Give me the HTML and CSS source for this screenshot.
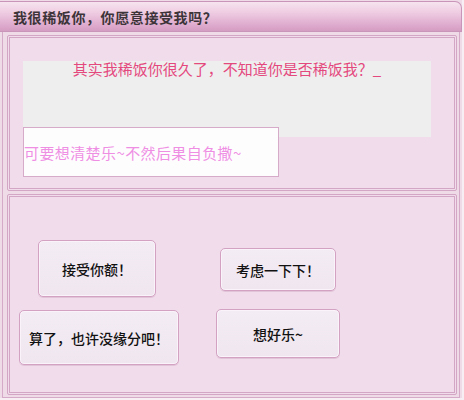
FILE: index.html
```html
<!DOCTYPE html>
<html lang="zh-CN">
<head>
<meta charset="utf-8">
<title>我很稀饭你</title>
<link rel="stylesheet" href="styles.css">
</head>
<body>
<div class="window">
  <div class="titlebar"><span class="title">我很稀饭你，你愿意接受我吗？</span></div>
  <div class="frame">
    <div class="panel panel-top">
      <div class="gray-field"><span class="love-text">其实我稀饭你很久了，不知道你是否稀饭我？_</span></div>
      <div class="white-field"><span class="warn-text">可要想清楚乐~不然后果自负撒~</span></div>
    </div>
    <div class="panel panel-bottom">
      <div class="row row-1">
        <button class="btn btn-accept">接受你额！</button>
        <button class="btn btn-think">考虑一下下！</button>
      </div>
      <div class="row row-2">
        <button class="btn btn-reject">算了，也许没缘分吧！</button>
        <button class="btn btn-ok">想好乐~</button>
      </div>
    </div>
  </div>
</div>
</body>
</html>
```
FILE: styles.css
```css
html, body {
  margin: 0;
  padding: 0;
  background: #f7eef4;
  font-family: "Noto Sans CJK SC", "Noto Sans", sans-serif;
}

.window {
  width: 462px;
  height: 398px;
  display: flex;
  flex-direction: column;
  background: #efdbe8;
}

.titlebar {
  box-sizing: border-box;
  height: 31px;
  margin-top: 1px;
  border: 1px solid #c996b9;
  border-left: none;
  border-radius: 0 7px 0 0;
  background: linear-gradient(to bottom, #f6e4ef 0%, #efcde2 35%, #e0aed0 75%, #d49cc2 100%);
  display: flex;
  align-items: center;
  padding-left: 13px;
}

.title {
  font-size: 14px;
  font-weight: bold;
  letter-spacing: 0.6px;
  color: #3c3439;
  line-height: 16px;
  margin-top: 1px;
}

.frame {
  flex: 1;
  display: flex;
  flex-direction: column;
  gap: 3px;
  padding: 3px 2px 2px 4px;
  margin-left: 2px;
  margin-right: 2px;
  border-left: 1px solid #d5aac8;
  border-right: 1px solid #d5aac8;
  border-bottom: 1px solid #d5aac8;
  box-sizing: border-box;
}

.panel {
  box-sizing: border-box;
  border: 3px double #d2a6c4;
  border-radius: 2px;
  background: #f0dcea;
}

.panel-top {
  height: 156px;
  padding: 23px 0 0 13px;
  display: flex;
  flex-direction: column;
}

.gray-field {
  width: 408px;
  height: 76px;
  background: #efeeef;
  display: flex;
  justify-content: center;
  align-items: flex-start;
}

.love-text {
  color: #e4497e;
  font-size: 15px;
  line-height: 18px;
  margin-top: -1px;
}

.white-field {
  box-sizing: border-box;
  width: 256px;
  height: 50px;
  margin-top: -10px;
  background: #fefdfe;
  border: 1px solid #d6abc9;
  display: flex;
  align-items: center;
}

.warn-text {
  color: #ef8fe4;
  font-size: 15px;
  letter-spacing: 0.4px;
  line-height: 18px;
  margin-top: 2px;
}

.panel-bottom {
  flex: 1;
  padding: 43px 0 0 0;
  display: flex;
  flex-direction: column;
}

.row {
  display: flex;
  align-items: flex-start;
}

.row-2 {
  margin-top: 12px;
}

.btn {
  box-sizing: border-box;
  font-family: "Noto Sans CJK SC", "Noto Sans", sans-serif;
  font-size: 14px;
  font-weight: 500;
  color: #111111;
  background: linear-gradient(to bottom, #f4ecf4, #efe6f0);
  border: 1px solid #d3a2c3;
  border-radius: 5px;
  box-shadow: inset 0 0 0 1px #faf4fa, 0 1px 0 #e2c4d8;
  padding: 0;
  display: flex;
  align-items: center;
  justify-content: center;
}

.btn-accept {
  width: 118px;
  height: 57px;
  margin-left: 28px;
}

.btn-think {
  width: 116px;
  height: 43px;
  margin-left: 64px;
  margin-top: 8px;
}

.btn-reject {
  width: 160px;
  height: 55px;
  margin-left: 9px;
  margin-top: 1px;
}

.btn-ok {
  width: 124px;
  height: 49px;
  margin-left: 37px;
}
```
